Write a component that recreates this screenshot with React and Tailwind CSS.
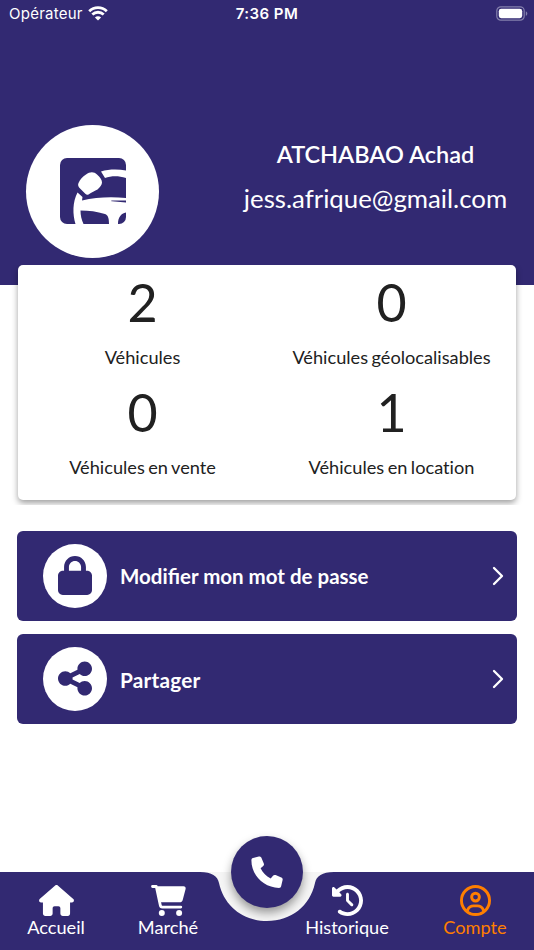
import { FaClockRotateLeft, FaHouse, FaLock, FaRegCircleUser, FaShareNodes } from "react-icons/fa6";

const stats = [
  { value: 2, label: "Véhicules" },
  { value: 0, label: "Véhicules géolocalisables" },
  { value: 0, label: "Véhicules en vente" },
  { value: 1, label: "Véhicules en location" },
];

const actions = [
  { icon: FaLock, label: "Modifier mon mot de passe", text: "text-[20.5px]" },
  { icon: FaShareNodes, label: "Partager", text: "text-[20.8px] tracking-[0.2px]" },
];

function StatusBar() {
  return (
    <div className="grid grid-cols-3 items-center h-[27px] pl-[9px] pr-[6px] font-['Inter',sans-serif] text-[15px] leading-[27px]">
      <div className="flex items-center gap-[6px]">
        <span className="w-[73px] whitespace-nowrap tracking-[0.25px]">Opérateur</span>
        <svg className="mt-[-1px]" width="20" height="15" viewBox="0 0 20 15" fill="none" stroke="currentColor" strokeWidth="2.8">
          <path d="M1.2 5.2C6.2 .4 13.8 .4 18.8 5.2" />
          <path d="M4.3 8.5c3.3-3 8.1-3 11.4 0" />
          <path d="M10 14.6 6.9 11.5c1.8-1.6 4.4-1.6 6.2 0z" fill="currentColor" stroke="none" />
        </svg>
      </div>
      <span className="ml-[-3px] text-center font-semibold tracking-[0.45px]">7:36 PM</span>
      <svg className="justify-self-end" width="32" height="15" viewBox="0 0 32 15">
        <rect x=".8" y=".8" width="27.4" height="13.4" rx="4" fill="none" stroke="#8480ad" strokeWidth="1.2" />
        <rect x="2.8" y="2.8" width="23.4" height="9.4" rx="2.4" fill="white" />
        <path d="M29.8 5.2c2 .8 2 3.8 0 4.6z" fill="#8480ad" />
      </svg>
    </div>
  );
}

function Avatar() {
  return (
    <div className="flex items-center justify-center w-[133px] h-[133px] rounded-full bg-white">
      <svg className="mt-[-1px]" width="66" height="66" viewBox="0 0 66 66">
        <rect width="66" height="66" rx="7" fill="#322972" />
        <g fill="white">
          <path d="M41 13.5C49 11 58 11 66 12.5V20C58 17.5 51 18 45 20z" />
          <path d="M26 16.5c4-3 8-3 11 0 3 2.5 5 5.5 5 8 0 2-2 5-4.5 7-2.5 1.5-6 2.5-9 5-1.2.6-2.2.2-3.2-.8l-6-6c-1.3-1.5-1.5-3.2-.8-4.700C20 21.5 22.5 18.5 26 16.5z" />
          <path d="M17.5 34.5 22.5 39 22 42.5C36 39 52 38.5 66 40V42.5H52c-1 0-1 .8 0 .8L66 44.5V54.5c-5 1-8 5-8 11.5H49c0-6-1-9-4-10C37 53.5 29 52.5 20.5 52.5 20.5 57 21.5 62 23.500 66H15.5C12.5 56 12.5 44 17.5 34.5z" />
        </g>
      </svg>
    </div>
  );
}

function CartIcon({ className }) {
  return (
    <svg className={className} viewBox="0 0 35 31" fill="none">
      <path d="M1.5 1.5H5.3L9.3 20.3C9.5 21.5 10.2 22.1 11.3 22.1H29.8" stroke="currentColor" strokeWidth="2.8" strokeLinecap="round" strokeLinejoin="round" />
      <path d="M6 1.3H32.5C34.1 1.3 35 2.5 34.6 4L31.7 14.9C31.3 16.5 30.2 17.3 28.6 17.3H9.4z" fill="currentColor" />
      <circle cx="10.8" cy="28" r="3" fill="currentColor" />
      <circle cx="28.1" cy="28" r="3" fill="currentColor" />
    </svg>
  );
}

function Tab({ icon: Icon, label, className, iconClass = "w-[31px]" }) {
  return (
    <div className={`flex flex-col items-center pt-[12.5px] ${className}`}>
      <Icon className={`h-[31px] ${iconClass}`} />
      <span className="mt-[-1px] text-[18.2px] leading-[24px]">{label}</span>
    </div>
  );
}

function TabBar() {
  return (
    <nav className="relative h-[78px] text-white">
      <svg className="absolute inset-0" width="534" height="78" viewBox="0 0 534 78">
        <path d="M200 0H334V60H200z" fill="#f5f5f5" />
        <path d="M0 0H200C212 0 217.5 4 219 11C224 34 243 49 267 49S310 34 315 11C316.5 4 322 0 334 0H534V78H0z" fill="#322972" />
      </svg>
      <div className="relative flex h-full">
        <Tab icon={FaHouse} label="Accueil" className="w-[112px]" iconClass="w-[35px]" />
        <Tab icon={CartIcon} label="Marché" className="w-[112px]" iconClass="w-[35px]" />
        <Tab icon={FaClockRotateLeft} label="Historique" className="ml-[67px] w-[112px]" />
        <Tab icon={FaRegCircleUser} label="Compte" className="ml-[16px] w-[112px] text-[#ff7f00]" />
      </div>
      <button className="absolute left-[231px] top-[-36px] flex items-center justify-center w-[72px] h-[72px] rounded-full bg-[#322972] shadow-[0_5px_10px_rgba(0,0,0,0.38)]">
        <svg width="32" height="33" viewBox="0 0 32 33" fill="currentColor">
          <path d="M2 2 7.8.5C9 .2 10 .8 10.4 1.8L12.8 7.4C13.2 8.5 13 9.3 12.2 10L9.6 12.3C11.5 16.5 15 20.3 19.7 22.4L22 19.7C22.7 18.9 23.5 18.7 24.6 19.1L30.3 21.5C31.4 22 31.9 22.9 31.6 24L30.2 30C30 31.2 29.2 31.9 28 31.9C12.9 31.9.4 19.4.4 4.2C.4 3.1.9 2.3 2 2z" />
        </svg>
      </button>
    </nav>
  );
}

export default function App() {
  return (
    <div className="flex flex-col w-[534px] h-[950px] overflow-hidden bg-white font-['Lato',sans-serif]">
      <header className="h-[285px] shrink-0 bg-[#322972] text-white">
        <StatusBar />
        <div className="flex mt-[98px] pl-[26px]">
          <Avatar />
          <div className="ml-[58px] w-[317px] pt-[13px] text-center">
            <h1 className="text-[23.5px] leading-[32px] font-semibold">ATCHABAO Achad</h1>
            <p className="mt-[11px] text-[25.8px] leading-[34px]">jess.afrique@gmail.com</p>
          </div>
        </div>
      </header>

      {/* Stats card overlapping the header */}
      <div className="relative -mt-[20px] h-[240px] shrink-0 px-[18px] [clip-path:inset(0)]">
        <div className="grid grid-cols-2 h-[235px] content-start rounded-[5px] bg-white text-[#212121] shadow-[0_3px_6px_rgba(0,0,0,0.38)]">
          {stats.map(({ value, label }) => (
            <div key={label} className="h-[110px] text-center">
              <div className="h-[80px] pt-[6px] text-[52px] leading-[62px]">{value}</div>
              <div className="text-[18.2px] leading-[24px] [word-spacing:-1.2px] [font-variant-ligatures:none]">{label}</div>
            </div>
          ))}
        </div>
      </div>

      <main className="flex-1 flex flex-col gap-[13px] px-[17px] pt-[26px]">
        {actions.map(({ icon: Icon, label, text }) => (
          <button key={label} className="flex items-center h-[90px] shrink-0 rounded-[6px] bg-[#322972] pl-[26px] pr-[12px] text-white">
            <span className="flex items-center justify-center w-[64px] h-[64px] rounded-full bg-white text-[#322972]">
              <Icon className="mt-[-1px] w-[34px] h-[39px]" />
            </span>
            <span className={`ml-[13px] flex-1 pt-[1px] text-left font-bold ${text}`}>{label}</span>
            <svg width="14" height="20" viewBox="0 0 14 20" fill="none" stroke="currentColor" strokeWidth="2.3" strokeLinecap="round" strokeLinejoin="round">
              <path d="m3 2 8 8-8 8" />
            </svg>
          </button>
        ))}
      </main>

      <TabBar />
    </div>
  );
}
